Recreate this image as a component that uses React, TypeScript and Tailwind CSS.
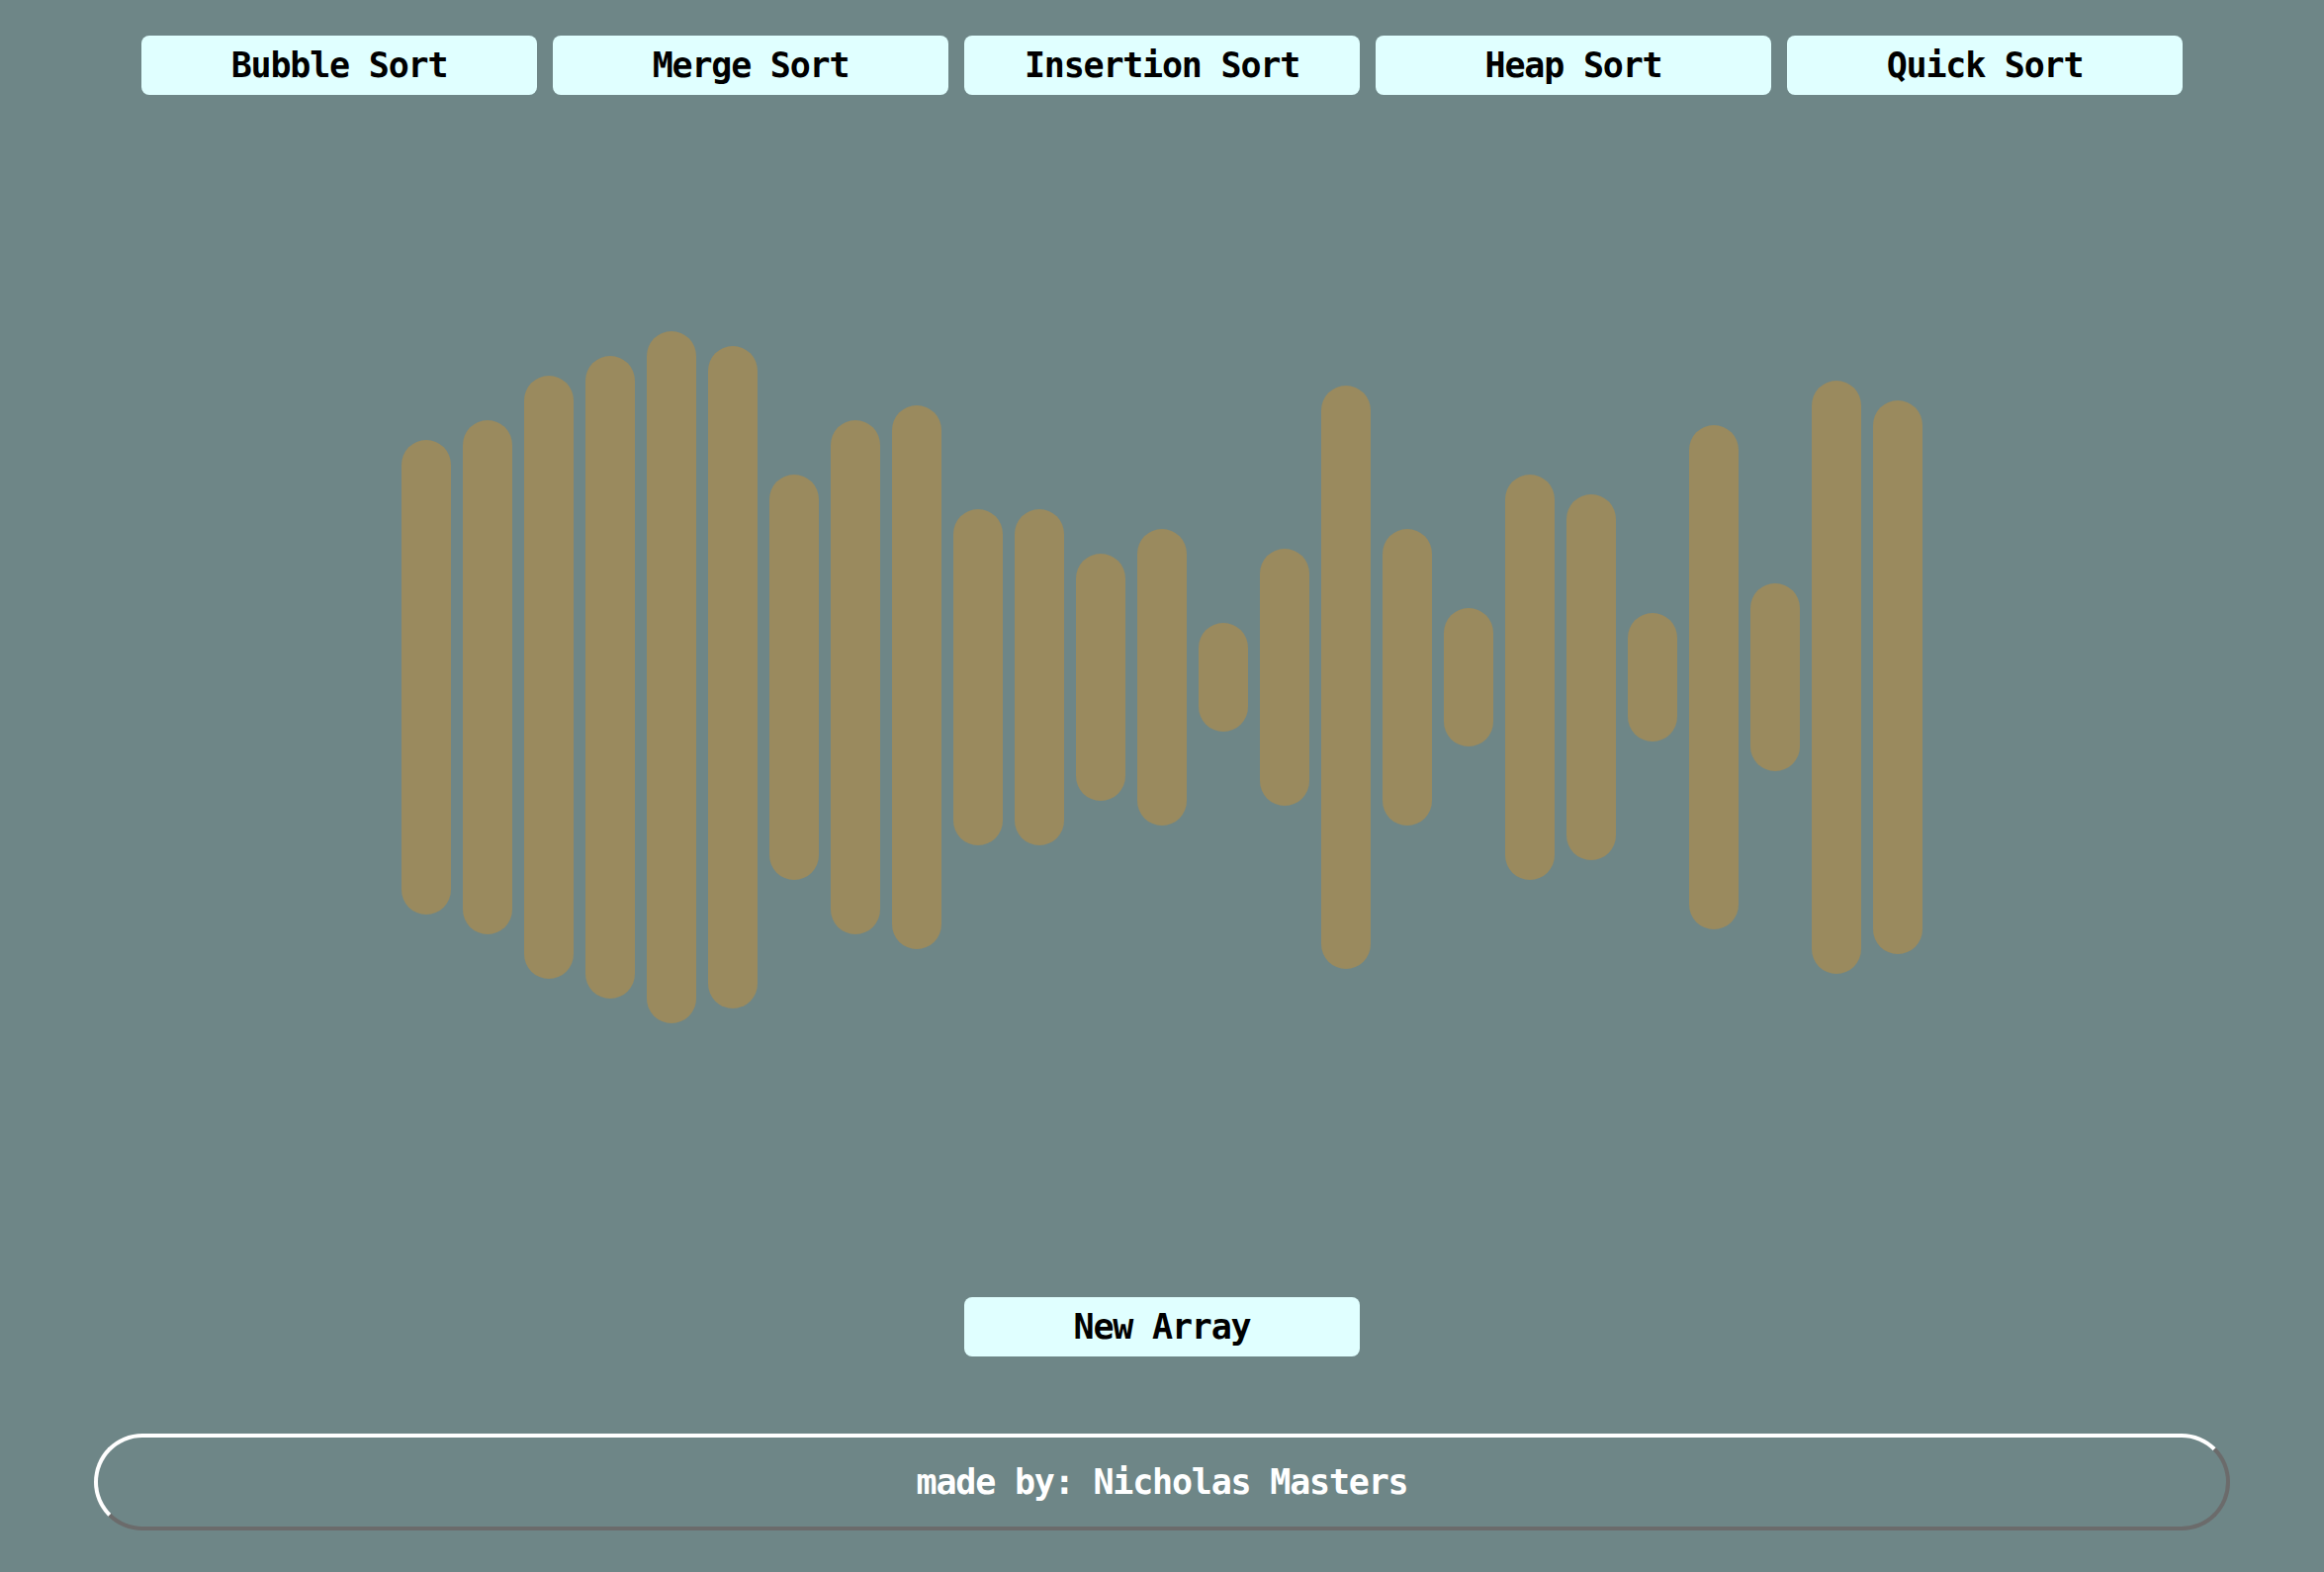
const SORTS = ['Bubble Sort', 'Merge Sort', 'Insertion Sort', 'Heap Sort', 'Quick Sort'];

// bar heights in px, as shown in the reference
const BARS = [480, 520, 610, 650, 700, 670, 410, 520, 550, 340, 340, 250, 300, 110, 260, 590, 300, 140, 410, 370, 130, 510, 190, 600, 560];

function SortButton({ label }: { label: string }) {
  return (
    <button className="w-[400px] h-[60px] rounded-lg bg-[#e0ffff] text-black text-[35px] font-bold leading-none tracking-[-1.2px]">
      {label}
    </button>
  );
}

export default function App() {
  return (
    <div
      className="w-full h-[1590px] bg-[#6e8687] flex flex-col items-center overflow-hidden"
      style={{ fontFamily: '"DejaVu Sans Mono", monospace' }}
    >
      <div className="flex gap-4 pt-[36px]">
        {SORTS.map((s) => (
          <SortButton key={s} label={s} />
        ))}
      </div>

      <div className="h-[1178px] flex items-center justify-center gap-[12px]">
        {BARS.map((h, i) => (
          <div key={i} className="w-[50px] rounded-full bg-[#9a8a5e]" style={{ height: h }} />
        ))}
      </div>

      <div className="mt-[38px]">
        <SortButton label="New Array" />
      </div>

      <footer className="mt-[78px] w-[2160px] h-[98px] rounded-full border-4 border-t-white border-l-white border-r-[#6b6b6b] border-b-[#6b6b6b] flex items-center justify-center">
        <span className="text-white text-[35px] font-bold leading-none tracking-[-1.2px]">made by: Nicholas Masters</span>
      </footer>
    </div>
  );
}
